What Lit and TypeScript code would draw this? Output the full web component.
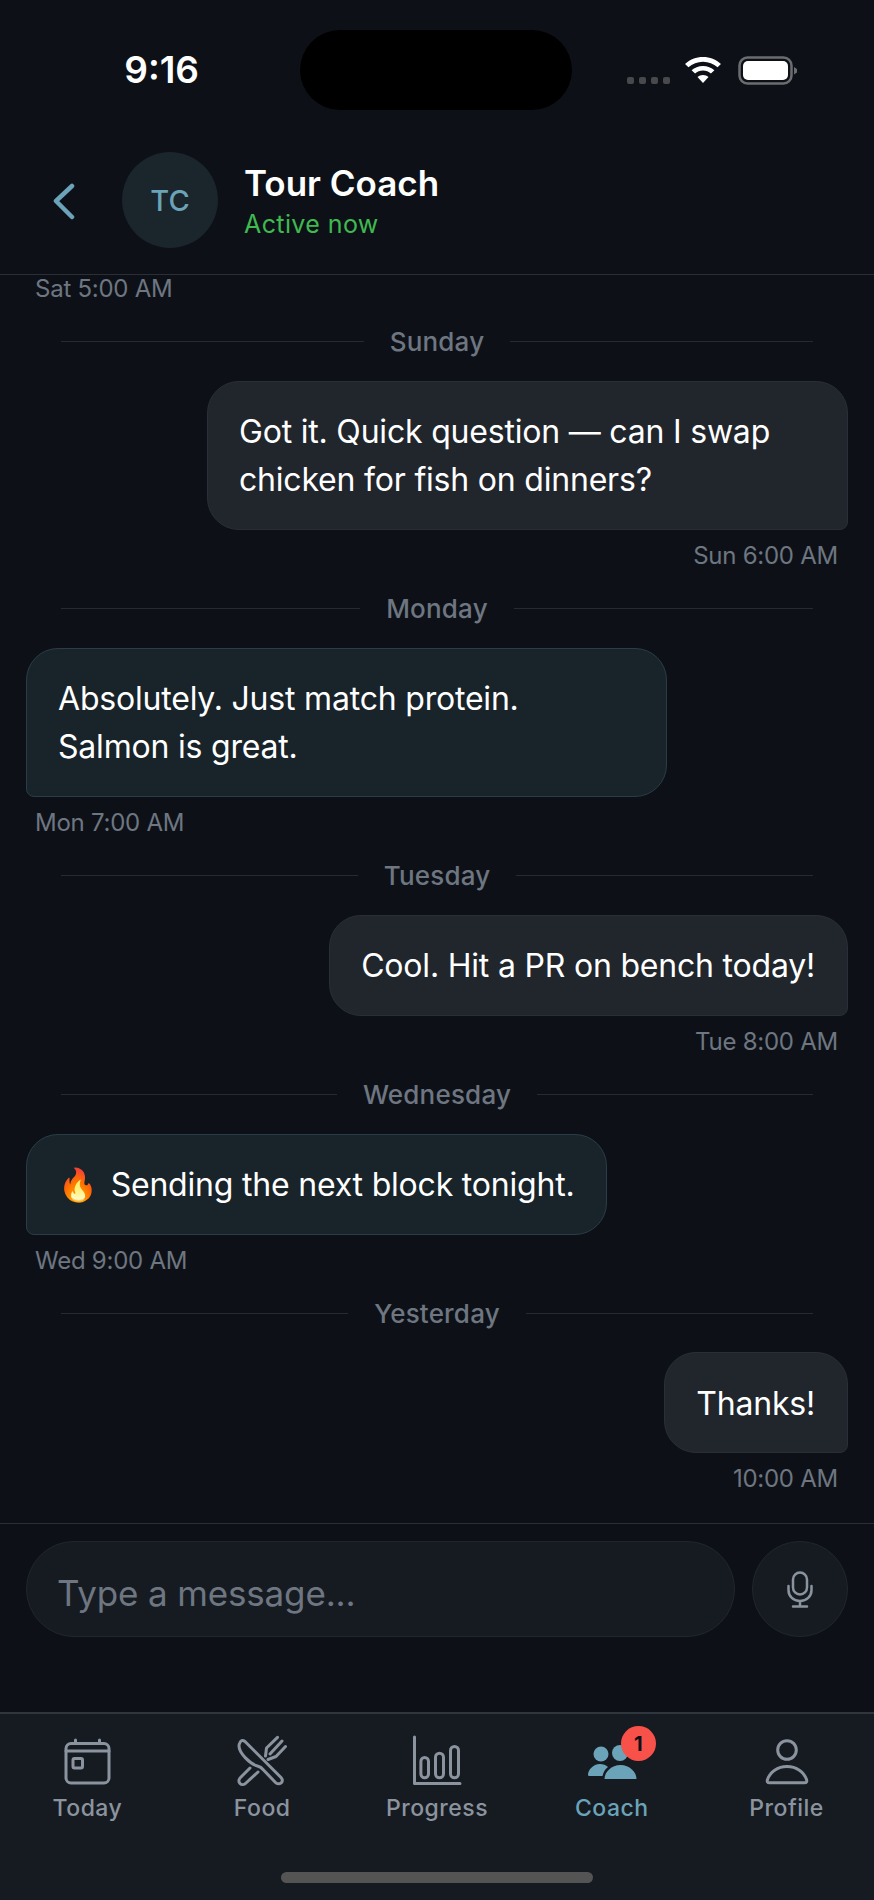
import { LitElement, html, css, svg } from "lit";
import { customElement } from "lit/decorators.js";

type Item =
  | { kind: "day"; label: string }
  | { kind: "msg"; side: "in" | "out"; lines: string[]; time: string; emoji?: string };

const ITEMS: Item[] = [
  { kind: "day", label: "Sunday" },
  { kind: "msg", side: "out", lines: ["Got it. Quick question — can I swap", "chicken for fish on dinners?"], time: "Sun 6:00 AM" },
  { kind: "day", label: "Monday" },
  { kind: "msg", side: "in", lines: ["Absolutely. Just match protein.", "Salmon is great."], time: "Mon 7:00 AM" },
  { kind: "day", label: "Tuesday" },
  { kind: "msg", side: "out", lines: ["Cool. Hit a PR on bench today!"], time: "Tue 8:00 AM" },
  { kind: "day", label: "Wednesday" },
  { kind: "msg", side: "in", emoji: "🔥", lines: ["Sending the next block tonight."], time: "Wed 9:00 AM" },
  { kind: "day", label: "Yesterday" },
  { kind: "msg", side: "out", lines: ["Thanks!"], time: "10:00 AM" },
];

const ICONS = {
  today: svg`<rect x="3" y="4.500" width="43" height="39.500" rx="5" /><path d="M3 12h43M12.500 1V4.500M36.500 1V4.500" /><rect x="10" y="19.500" width="9.500" height="9.500" rx="1.500" />`,
  food: svg`<path d="M2 3.500C3 1 5 1 7 2.500L43 38.500c2 2 1.500 4.500 0 5.500-1.500 1-4 1-5.500-.5L25.500 31c-1.500-2-3.500-3.500-6-4C12 25 1 14 1 7c0-1.500.3-2.500 1-3.500z" /><path d="M12 29L2.500 38.500c-2 2-2 4.500-.5 6s4 1.500 6-.5L20 33M27.500 17l1-8L39.500-1.700M32 15L44 2M30 20.500l8-3L47.500 7.500" />`,
  progress: svg`<path d="M1.500-2V44.500H47" /><rect x="7.900" y="18.500" width="7.600" height="20.300" rx="3.800" /><rect x="22.500" y="14.200" width="8" height="24.600" rx="4" /><rect x="37.500" y="7.500" width="8" height="31.300" rx="4" />`,
  profile: svg`<circle cx="24" cy="11" r="9.300" /><path d="M6.500 43.800c-2 0-2.700-1.300-2-3.300C7 33 14.500 27.500 24 27.500s17 5.500 19.500 13c.7 2 0 3.300-2 3.300z" />`,
};

@customElement("app-root")
export class AppRoot extends LitElement {
  static styles = css`
    :host { display: block; width: 874px; height: 1900px; font-family: Inter, "Noto Sans", sans-serif; color: #fff; }
    * { box-sizing: border-box; }
    .page { width: 874px; height: 1900px; background: #0d1117; display: flex; flex-direction: column; overflow: hidden; }

    .status { height: 120px; flex: none; display: grid; grid-template-columns: 300px 272px 1fr; padding-top: 30px; }
    .clock { font-size: 37px; font-weight: 600; line-height: 80px; height: 80px; text-align: right; padding-right: 101px; white-space: nowrap; }
    .island { width: 272px; height: 80px; background: #000; border-radius: 40px; }
    .sys { display: flex; align-items: flex-start; padding-left: 55px; }
    .dots { display: flex; gap: 5px; margin-top: 47px; }
    .dots i { width: 7px; height: 7px; border-radius: 2px; background: #47494d; }
    .wifi { margin: 26px 0 0 14px; }
    .battery { margin: 26px 0 0 16px; }

    .header { height: 155px; flex: none; display: flex; align-items: flex-start; border-bottom: 1px solid #2a2e35; padding: 32px 0 0 52px; }
    .back { margin-top: 31px; }
    .avatar { width: 96px; height: 96px; margin: 0 0 0 46px; border-radius: 50%; background: #1a252c; color: #6ba3b8; display: flex; align-items: center; justify-content: center; font-size: 29px; font-weight: 500; }
    .who { margin-left: 26px; }
    .name { font-size: 35px; font-weight: 600; line-height: 44px; margin-top: 9px; white-space: nowrap; }
    .active { font-size: 25px; color: #3fb950; line-height: 30px; margin-top: 4px; letter-spacing: 0.4px; }

    .messages { flex: 1; min-height: 0; overflow: hidden; padding: 0 26px; display: flex; flex-direction: column; }
    .time { font-size: 24px; letter-spacing: -0.25px; line-height: 28px; color: #6e7681; padding: 0 10px 0 9px; height: 28px; white-space: nowrap; flex: none; }
    .time.out { text-align: right; }
    .day { display: flex; align-items: center; gap: 26px; padding: 0 35px; height: 30px; margin-top: 23.900px; font-size: 26px; color: #6e7681; font-weight: 500; letter-spacing: .2px; white-space: nowrap; flex: none; }
    .day::before, .day::after { content: ""; flex: 1; height: 1px; background: #262b32; }
    .row { display: flex; margin-top: 24px; flex: none; }
    .row.out { justify-content: flex-end; }
    .bubble { padding: 26.500px 32px 24.500px 31px; border-radius: 32px; font-size: 32px; letter-spacing: -0.2px; line-height: 48px; white-space: nowrap; border: 1px solid; }
    .bubble.wide { width: 641px; }
    .bubble.out { background: #21262d; border-color: #2a2f37; border-bottom-right-radius: 8px; }
    .bubble.in { background: #19232a; border-color: #2a3d47; border-bottom-left-radius: 8px; }
    .emoji { margin-right: 4px; }
    .stamp { margin-top: 12px; }

    .composer { height: 189px; flex: none; border-top: 1px solid #2a2e35; padding: 17px 26px 0; display: flex; gap: 17px; align-items: flex-start; }
    .input { flex: 1; height: 96px; border-radius: 48px; background: #161b22; border: 1px solid #21262d; padding: 7px 0 0 30px; font-size: 35px; letter-spacing: -0.15px; color: #6e7681; display: flex; align-items: center; }
    .mic { width: 96px; height: 96px; border-radius: 50%; background: #161b22; border: 1px solid #21262d; display: flex; align-items: center; justify-content: center; flex: none; }

    .tabs { height: 188px; flex: none; background: #161b22; border-top: 2px solid #30363d; position: relative; display: grid; grid-template-columns: repeat(5, 1fr); }
    .tab { display: flex; flex-direction: column; align-items: center; padding-top: 25px; color: #8b949e; font-size: 23px; font-weight: 500; letter-spacing: .5px; position: relative; }
    .tab.active-tab { color: #6ba3b8; }
    .tab svg.ico { width: 48px; height: 48px; fill: none; stroke: currentColor; stroke-width: 3; stroke-linecap: round; stroke-linejoin: round; display: block; overflow: visible; }
    .tab span.lbl { margin-top: 7px; line-height: 28px; }
    .coach-ico { position: relative; width: 64px; height: 48px; }
    .badge { position: absolute; left: 41px; top: -13px; width: 35px; height: 35px; border-radius: 50%; background: #f85149; color: #0d1117; font-size: 20px; font-weight: 700; display: flex; align-items: center; justify-content: center; letter-spacing: 0; }
    .home { position: absolute; left: 281px; top: 158px; width: 312px; height: 11px; border-radius: 6px; background: #545454; }
  `;

  private msg(m: Extract<Item, { kind: "msg" }>) {
    return html`
      <div class="row ${m.side}">
        <div class="bubble ${m.side} ${m.lines.length > 1 ? "wide" : ""}">
          ${m.lines.map((l) => html`<div>${m.emoji ? html`<span class="emoji">${m.emoji}</span> ` : ""}${l}</div>`)}
        </div>
      </div>
      <div class="time stamp ${m.side}">${m.time}</div>
    `;
  }

  private tab(label: string, key: keyof typeof ICONS) {
    return html`<div class="tab">
      <svg class="ico" viewBox="0 0 48 48">${ICONS[key]}</svg>
      <span class="lbl">${label}</span>
    </div>`;
  }

  render() {
    return html`
      <div class="page">
        <div class="status">
          <div class="clock">9:16</div>
          <div class="island"></div>
          <div class="sys">
            <div class="dots"><i></i><i></i><i></i><i></i></div>
            <svg class="wifi" width="38" height="28" viewBox="0 0 36 28" fill="#fff" preserveAspectRatio="none">
              <path d="M18 1C11.500 1 5.500 3.600 1 8l3.200 3.200C8 7.800 12.700 5.700 18 5.700s10 2.100 13.800 5.500L35 8C30.500 3.600 24.500 1 18 1z"/>
              <path d="M18 10c-4.200 0-8 1.600-10.800 4.300l3.300 3.300c2-1.900 4.600-3 7.500-3s5.500 1.100 7.500 3l3.300-3.300C26 11.600 22.200 10 18 10z"/>
              <path d="M18 19c-2 0-3.900.8-5.200 2L18 27l5.200-6c-1.300-1.200-3.200-2-5.200-2z"/>
            </svg>
            <svg class="battery" width="60" height="30" viewBox="0 0 60 30">
              <rect x="1.500" y="1.500" width="52" height="26" rx="8" fill="none" stroke="#6b6d70" stroke-width="2.500"/>
              <rect x="5" y="5" width="45" height="19" rx="5" fill="#fff"/>
              <path d="M56 11l3 2v3.500l-3 2z" fill="#6b6d70"/>
            </svg>
          </div>
        </div>

        <div class="header">
          <svg class="back" width="24" height="38" viewBox="0 0 24 38" fill="none" stroke="#6ba3b8" stroke-width="4.500" stroke-linecap="round" stroke-linejoin="round" aria-hidden="true"><path d="M20 3L4 18l16 16"/></svg>
          <div class="avatar">TC</div>
          <div class="who">
            <div class="name">Tour Coach</div>
            <div class="active">Active now</div>
          </div>
        </div>

        <div class="messages">
          <div class="time">Sat 5:00 AM</div>
          ${ITEMS.map((it) =>
            it.kind === "day" ? html`<div class="day">${it.label}</div>` : this.msg(it),
          )}
        </div>

        <div class="composer">
          <div class="input">Type a message...</div>
          <div class="mic">
            <svg width="26" height="37" viewBox="0 0 26 37" fill="none" stroke="#8b949e" stroke-width="2.500" stroke-linecap="round"><rect x="6" y="1.500" width="14" height="22" rx="7"/><path d="M1.500 15v4c0 6.500 5 11 11.500 11s11.500-4.500 11.500-11v-4M13 30v5.500M6 35.500h14"/></svg>
          </div>
        </div>

        <div class="tabs">
          ${this.tab("Today", "today")}
          ${this.tab("Food", "food")}
          ${this.tab("Progress", "progress")}
          <div class="tab active-tab">
            <div class="coach-ico">
              <svg width="64" height="48" viewBox="0 0 64 48" fill="#6ba3b8">
                <circle cx="21" cy="15" r="7.500"/><circle cx="40" cy="14" r="8"/>
                <path d="M8 36c0-5 5-11 12-11 3 0 6 1 8 3-3 2-4.500 5-5.500 9H10c-1.500 0-2-.5-2-1z"/>
                <path d="M24.500 40c0-7 7-14 16-14s16 7 16 14z"/>
              </svg>
              <div class="badge">1</div>
            </div>
            <span class="lbl">Coach</span>
          </div>
          ${this.tab("Profile", "profile")}
          <div class="home"></div>
        </div>
      </div>
    `;
  }
}
